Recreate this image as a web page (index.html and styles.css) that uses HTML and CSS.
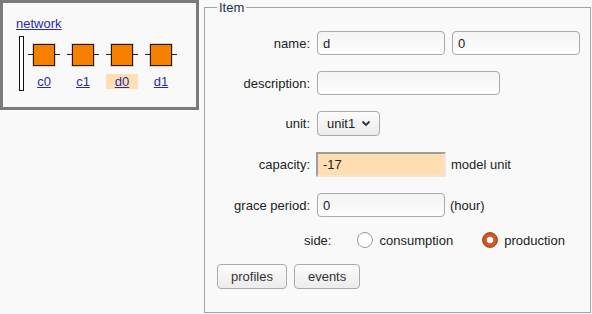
FILE: index.html
```html
<!DOCTYPE html>
<html lang="en">
<head>
  <meta charset="UTF-8" />
  <title>Item</title>
  <link rel="stylesheet" href="styles.css">
</head>
<body>
  <div class="network-panel">
    <a href="#" class="net-link">network</a>
    <div class="net-row">
      <div class="bus"></div>
      <div class="node"><div class="wire"><span class="box"></span></div><a href="#" class="node-label">c0</a></div>
      <div class="node"><div class="wire"><span class="box"></span></div><a href="#" class="node-label">c1</a></div>
      <div class="node"><div class="wire"><span class="box"></span></div><a href="#" class="node-label selected">d0</a></div>
      <div class="node"><div class="wire"><span class="box"></span></div><a href="#" class="node-label">d1</a></div>
    </div>
  </div>

  <fieldset class="item">
    <legend>Item</legend>
    <div class="form">
      <label class="lbl">name:</label>
      <div class="field">
        <input type="text" class="txt" value="d">
        <input type="text" class="txt" value="0">
      </div>

      <label class="lbl">description:</label>
      <div class="field"><input type="text" class="txt wide" value=""></div>

      <label class="lbl">unit:</label>
      <div class="field">
        <span class="select">unit1
          <svg width="10" height="7" viewBox="0 0 10 7"><path d="M1.5 1.5 L5 5 L8.5 1.5" fill="none" stroke="#333" stroke-width="1.8"/></svg>
        </span>
      </div>

      <label class="lbl">capacity:</label>
      <div class="field"><input type="text" class="txt cap" value="-17"><span class="unit">model unit</span></div>

      <label class="lbl">grace period:</label>
      <div class="field"><input type="text" class="txt" value="0"><span class="unit">(hour)</span></div>

      <div class="side-row">
        <span class="side-lbl">side:</span>
        <span class="radio"></span><span class="radio-txt">consumption</span>
        <span class="radio on"></span><span class="radio-txt">production</span>
      </div>

      <div class="btn-row">
        <button class="btn">profiles</button>
        <button class="btn">events</button>
      </div>
    </div>
  </fieldset>
</body>
</html>
```

FILE: styles.css
```css
html, body {
  margin: 0; padding: 0;
  background: #f9f9f9;
  font-family: 'Liberation Sans', Arial, sans-serif; font-size: 13px; color: #222;
}
body { display: flex; align-items: flex-start; }

/* left network panel */
.network-panel {
  width: 199px; height: 110px; box-sizing: border-box;
  border: 3px solid #7b7b7b; padding: 13px 0 0 13px;
}
.net-link, .node-label { color: #2b2ba0; text-decoration: underline; }
.net-link { display: block; line-height: 15px; }
.net-row { display: flex; align-items: flex-start; gap: 4px; margin-top: 5px; padding-left: 3px; }
.bus {
  width: 3px; height: 53px; background: #fff; border: 1px solid #111;
}
.node { width: 32px; display: flex; flex-direction: column; align-items: center; margin-right: 3px; margin-top: 7px; }
.wire {
  width: 32px; height: 23px; display: flex; justify-content: center; align-items: center;
  background: linear-gradient(#222, #222) center / 100% 1px no-repeat;
}
.box {
  width: 20px; height: 20px; background: #f77f00; border: 1px solid #2a1a00;
  box-shadow: 0 0 0 1px rgba(0,0,0,0.15);
}
.node-label { width: 32px; text-align: center; line-height: 15px; margin-top: 8px; }
.node-label.selected { background: #fde0b4; }

/* item fieldset */
.item {
  width: 387px; box-sizing: border-box; margin: 0 0 0 5px;
  border: 1px solid #a3a3a3; padding: 16px 12px 23px 12px; min-width: 0;
}
.item legend { padding: 0 2px; line-height: 15px; color: #1f2f55; }
.form {
  display: grid; grid-template-columns: 93px auto;
  column-gap: 7px; row-gap: 16px; align-items: center;
}
.lbl { text-align: right; }
.field { display: flex; align-items: center; gap: 7px; }
.txt {
  width: 128px; height: 24px; box-sizing: border-box; margin: 0;
  border: 1px solid #aaa; border-radius: 4px; padding: 0 5px;
  background: linear-gradient(#f4f4f4, #fdfdfd);
  font: inherit; color: #222;
}
.txt.wide { width: 183px; }
.txt.cap {
  width: 130px; height: 25px; margin-left: -1px; border-radius: 0;
  border: 2px solid #f1e6d6; border-top-color: #9e9e9e; border-left-color: #9e9e9e;
  background: #ffdfb1;
}
.unit { margin-left: -2px; }
.select {
  display: inline-flex; align-items: center; gap: 6px;
  height: 25px; box-sizing: border-box; padding: 0 8px 0 9px;
  border: 1px solid #aaa; border-radius: 4px;
  background: linear-gradient(#fcfcfc, #ececec);
}

.side-row { grid-column: 1 / -1; display: flex; align-items: center; padding-left: 87px; height: 16px; margin-top: -1px; }
.side-lbl { margin-right: 26px; }
.radio {
  width: 14px; height: 14px; border-radius: 50%; border: 1px solid #999;
  background: #fff; margin-right: 6px;
}
.radio-txt { margin-right: 29px; }
.radio.on {
  border-color: #a8451d;
  background: radial-gradient(circle, #fff 0 3px, #d85a2c 3.6px, #bf4d22 100%);
}

.btn-row { grid-column: 1 / -1; display: flex; gap: 7px; margin-top: 0; }
.btn {
  height: 25px; padding: 0 13px; margin: 0;
  border: 1px solid #aaa; border-radius: 4px;
  background: linear-gradient(#fbfbfb, #ececec);
  font: inherit; color: #333;
}
```
